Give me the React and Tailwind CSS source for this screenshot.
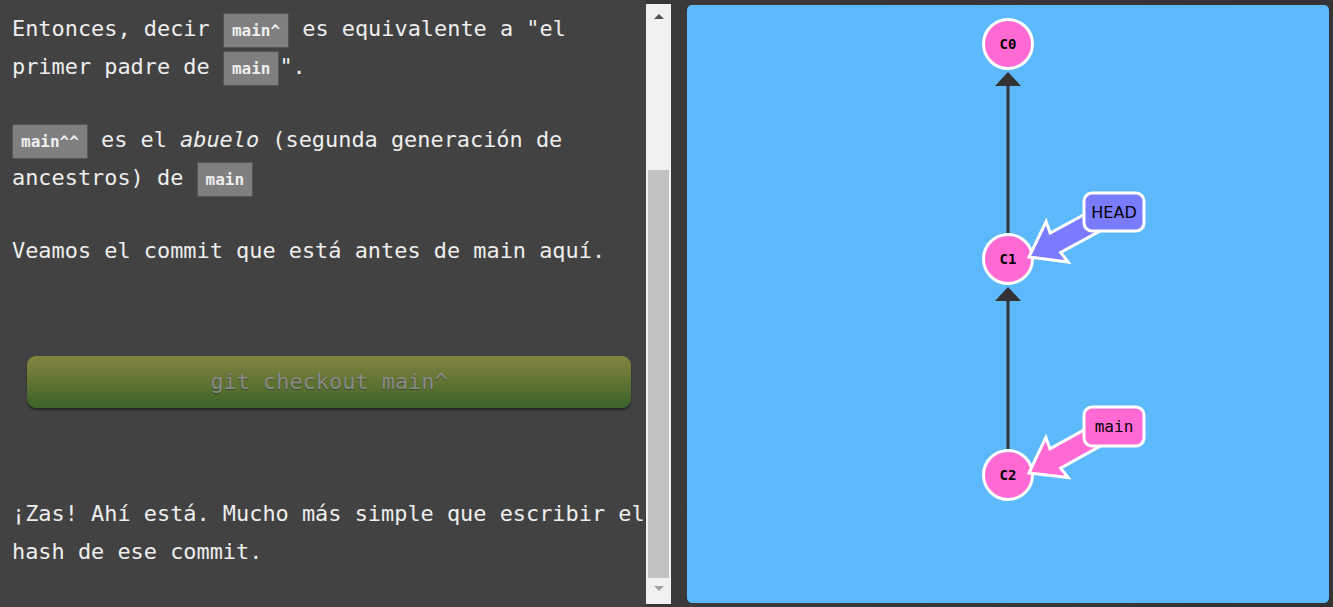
import React from "react";

const Code = ({ children }) => (
  <code className="inline-block align-middle rounded-[1px] border border-[#555] bg-[#7f7f7f] px-[8px] py-[8px] font-['DejaVu_Sans_Mono',monospace] text-[16px] leading-[17px] font-semibold text-[#eeeeee]">
    {children}
  </code>
);

// thick ref arrow pointing from a label to a commit
const refArrow = (tx, ty, lx, ly) => {
  const dx = lx - tx;
  const dy = ly - ty;
  const len = Math.hypot(dx, dy);
  const d = [dx / len, dy / len];
  const n = [-d[1], d[0]];
  const p = (a, b) => [tx + d[0] * a + n[0] * b, ty + d[1] * a + n[1] * b];
  const pts = [p(0, 0), p(32, -23), p(30, -11), p(80, -11), p(80, 11), p(30, 11), p(32, 23)];
  return pts.map((q) => q.join(",")).join(" ");
};

const Graph = () => (
  <svg viewBox="687 5 642 598" className="h-full w-full">
    {/* edges */}
    <line x1="1008" y1="84" x2="1008" y2="236" stroke="#333" strokeWidth="3" />
    <polygon points="1008,72 995,86 1021,86" fill="#333" />
    <line x1="1008" y1="300" x2="1008" y2="452" stroke="#333" strokeWidth="3" />
    <polygon points="1008,287 995,301 1021,301" fill="#333" />

    {/* commits */}
    {[
      ["C0", 44],
      ["C1", 259],
      ["C2", 475],
    ].map(([t, y]) => (
      <g key={t}>
        <circle cx="1008" cy={y} r="24.5" fill="#ff69d4" stroke="#fff" strokeWidth="3" />
        <text x="1008" y={y + 5} textAnchor="middle" fontFamily="DejaVu Sans Mono, monospace" fontSize="14" fontWeight="bold" fill="#000">
          {t}
        </text>
      </g>
    ))}

    {/* HEAD */}
    <polygon points={refArrow(1029, 257, 1112, 212)} fill="#7b7bff" stroke="#fff" strokeWidth="3" strokeLinejoin="miter" />
    <rect x="1084" y="193" width="60" height="38" rx="8" fill="#7b7bff" stroke="#fff" strokeWidth="3" />
    <text x="1114" y="218" textAnchor="middle" fontFamily="DejaVu Sans, sans-serif" fontSize="16" fill="#000">
      HEAD
    </text>

    {/* main */}
    <polygon points={refArrow(1029, 473, 1112, 427)} fill="#ff69d4" stroke="#fff" strokeWidth="3" strokeLinejoin="miter" />
    <rect x="1084" y="407" width="60" height="39" rx="8" fill="#ff69d4" stroke="#fff" strokeWidth="3" />
    <text x="1114" y="432" textAnchor="middle" fontFamily="DejaVu Sans Mono, monospace" fontSize="16" fill="#000">
      main
    </text>
  </svg>
);

export default function App() {
  return (
    <div className="flex h-[607px] w-[1333px] overflow-hidden bg-[#373737] font-['DejaVu_Sans_Mono',monospace]">
      {/* left text pane */}
      <div className="w-[646px] shrink-0 bg-[#424242] pl-[12px] pt-[10px] text-[21.9px] leading-[38px] text-[#eeeeee]">
        <p>
          Entonces, decir <Code>main^</Code> es equivalente a "el primer padre de <Code>main</Code>".
        </p>
        <p className="mt-[35px]">
          <Code>main^^</Code> es el <em>abuelo</em> (segunda generación de ancestros) de <Code>main</Code>
        </p>
        <p className="mt-[35px]">Veamos el commit que está antes de main aquí.</p>

        <div className="mt-[86px] pl-[15px] pr-[15px]">
          <button className="h-[52px] w-[604px] rounded-[9px] bg-gradient-to-b from-[#848540] to-[#3b6329] text-[21.9px] text-[#8a8a8a] shadow-[0_2px_2px_rgba(0,0,0,0.45)] [text-shadow:0_1px_1px_rgba(0,0,0,0.35)]">
            git checkout main^
          </button>
        </div>

        <p className="mt-[87px] whitespace-nowrap">¡Zas! Ahí está. Mucho más simple que escribir el</p>
        <p>hash de ese commit.</p>
      </div>

      {/* scrollbar */}
      <div className="flex h-[600px] w-[25px] shrink-0 flex-col items-center self-start mt-[4px] bg-[#f1f1f1]">
        <div className="flex h-[166px] w-full justify-center pt-[10px]">
          <div className="h-0 w-0 border-x-[5px] border-b-[5px] border-x-transparent border-b-[#505050]" />
        </div>
        <div className="h-[408px] w-[21px] bg-[#c1c1c1]" />
        <div className="flex flex-1 w-full justify-center pt-[8px]">
          <div className="h-0 w-0 border-x-[5px] border-t-[5px] border-x-transparent border-t-[#a3a3a3]" />
        </div>
      </div>

      {/* visualization */}
      <div className="flex-1 bg-gradient-to-r from-[#3a3a3a] to-[#333333] pb-[4px] pl-[16px] pr-[4px] pt-[5px]">
        <div className="h-full w-full overflow-hidden rounded-[5px] bg-[#5cbafc]">
          <Graph />
        </div>
      </div>
    </div>
  );
}
